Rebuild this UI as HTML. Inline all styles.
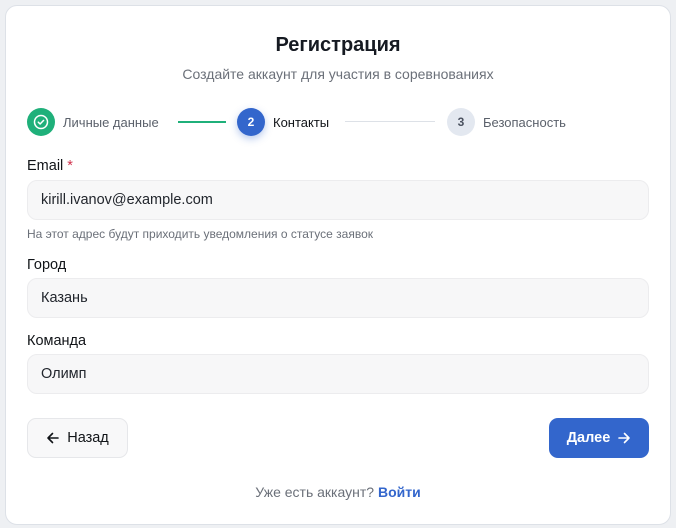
<!DOCTYPE html>
<html><head><meta charset="utf-8"><style>
*{box-sizing:border-box;margin:0;padding:0}
body{width:676px;height:528px;background:#eef0f3;font-family:"Liberation Sans","DejaVu Sans",sans-serif;position:relative;overflow:hidden;color:#1a1d24}
.card{position:absolute;left:5px;top:5px;width:666px;height:520px;background:#fff;border:1px solid #dde1e7;border-radius:12px}
.a{position:absolute}
h1{position:absolute;left:0;width:676px;top:34px;text-align:center;font-size:20px;font-weight:bold;color:#161a22}
.sub{left:0;width:676px;top:66px;text-align:center;font-size:14px;color:#6b7079}
.c{width:28px;height:28px;border-radius:50%;top:108px;display:flex;align-items:center;justify-content:center;font-size:12px;font-weight:bold}
.sl{top:115px;font-size:13px;color:#5b616b}
.lbl{font-size:14.5px;color:#111418;left:27px}
.inp{left:27px;width:622px;height:40px;background:#f7f7f8;border:1px solid #ececee;border-radius:10px;font-size:14.5px;padding-left:13px;line-height:38px;color:#22262d}
.btn{top:418px;height:40px;border-radius:9px;font-size:14.5px;display:flex;align-items:center;justify-content:center;gap:7px}
</style></head><body>
<div class="card"></div>
<h1>Регистрация</h1>
<div class="a sub">Создайте аккаунт для участия в соревнованиях</div>
<div class="a c" style="left:27px;background:#1fb07a"><svg width="16" height="16" viewBox="0 0 16 16"><circle cx="8" cy="8" r="6.5" fill="none" stroke="#fff" stroke-width="1.5"/><path d="M5.3 8.2l1.8 1.8 3.5-3.6" fill="none" stroke="#fff" stroke-width="1.5" stroke-linecap="round" stroke-linejoin="round"/></svg></div>
<div class="a sl" style="left:63px">Личные данные</div>
<div class="a" style="left:178px;top:121px;width:48px;height:2px;background:#1fb07a"></div>
<div class="a c" style="left:237px;background:#3366cc;color:#fff;box-shadow:0 3px 8px rgba(51,102,204,.35)">2</div>
<div class="a sl" style="left:273px;color:#111418">Контакты</div>
<div class="a" style="left:345px;top:121px;width:90px;height:1px;background:#dde1e7"></div>
<div class="a c" style="left:447px;background:#e3e8f0;color:#4b5260">3</div>
<div class="a sl" style="left:483px">Безопасность</div>
<div class="a lbl" style="top:158px">Email <span style="color:#d0304a">*</span></div>
<div class="a inp" style="top:180px">kirill.ivanov@example.com</div>
<div class="a" style="left:27px;top:227px;font-size:12px;color:#6b7079">На этот адрес будут приходить уведомления о статусе заявок</div>
<div class="a lbl" style="top:257px">Город</div>
<div class="a inp" style="top:278px">Казань</div>
<div class="a lbl" style="top:333px">Команда</div>
<div class="a inp" style="top:354px">Олимп</div>
<div class="a btn" style="left:27px;width:101px;background:#f8f8f9;border:1px solid #e6e7ea;color:#111418"><svg width="14" height="14" viewBox="0 0 14 14"><path d="M12 7H2M6.5 2.5L2 7l4.5 4.5" fill="none" stroke="#111418" stroke-width="1.6" stroke-linecap="round" stroke-linejoin="round"/></svg>Назад</div>
<div class="a btn" style="left:549px;width:100px;background:#3366cc;color:#fff;font-weight:bold">Далее<svg width="14" height="14" viewBox="0 0 14 14"><path d="M2 7h10M7.5 2.5L12 7l-4.5 4.5" fill="none" stroke="#fff" stroke-width="1.6" stroke-linecap="round" stroke-linejoin="round"/></svg></div>
<div class="a" style="left:0;width:676px;top:484px;text-align:center;font-size:14px;color:#6b7079">Уже есть аккаунт? <b style="color:#3366cc">Войти</b></div>
</body></html>
